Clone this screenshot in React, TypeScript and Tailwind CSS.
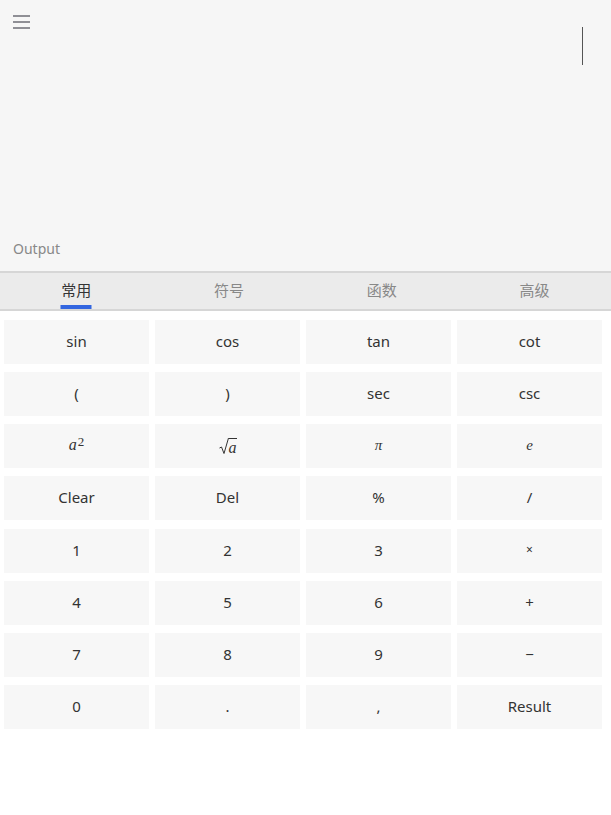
import React from "react";

const tabs = ["常用", "符号", "函数", "高级"];

type Key = { label: React.ReactNode; math?: boolean };

const Sup = () => (
  <span className="italic" style={{ fontFamily: "'Liberation Serif', serif" }}>
    <span className="text-[16px]">a</span>
    <sup className="not-italic text-[13px] relative -top-[4px] ml-[1px]">2</sup>
  </span>
);

const Sqrt = () => (
  <span className="inline-flex items-end mt-[3px]" style={{ fontFamily: "'Liberation Serif', serif" }}>
    <svg width="10" height="18" viewBox="0 0 10 18" className="mb-[1px]">
      <path d="M0.5 11 L2.5 10 L5 16.5 L9.5 1" fill="none" stroke="#333" strokeWidth="1" />
    </svg>
    <span className="italic text-[16px] border-t border-[#333] leading-[16px] pt-[1px]">a</span>
  </span>
);

const keys: Key[] = [
  { label: "sin" }, { label: "cos" }, { label: "tan" }, { label: "cot" },
  { label: "(" }, { label: ")" }, { label: "sec" }, { label: "csc" },
  { label: <Sup />, math: true },
  { label: <Sqrt />, math: true },
  { label: <span className="italic text-[15px]" style={{ fontFamily: "'Liberation Serif', serif" }}>π</span>, math: true },
  { label: <span className="italic text-[15px]" style={{ fontFamily: "'Liberation Serif', serif" }}>e</span>, math: true },
  { label: "Clear" }, { label: "Del" }, { label: "%" }, { label: "/" },
  { label: "1" }, { label: "2" }, { label: "3" }, { label: <span className="text-[12px]">×</span> },
  { label: "4" }, { label: "5" }, { label: "6" }, { label: "+" },
  { label: "7" }, { label: "8" }, { label: "9" }, { label: "−" },
  { label: "0" }, { label: "." }, { label: "," }, { label: "Result" },
];

export default function App() {
  return (
    <div
      className="w-[611px] h-[815px] bg-white text-[#333]"
      style={{ fontFamily: "'Noto Sans', 'Noto Sans CJK SC', sans-serif" }}
    >
      <div className="relative h-[271px] bg-[#f6f6f6] flex flex-col justify-between px-[13px] pt-[15px] pb-[13px]">
        <div className="flex flex-col gap-[4px] w-[17px]">
          <div className="h-[2px] bg-[#8f8f95]" />
          <div className="h-[2px] bg-[#8f8f95]" />
          <div className="h-[2px] bg-[#8f8f95]" />
        </div>
        <div className="absolute left-[582px] top-[27px] w-[1px] h-[38px] bg-[#555]" />
        <div className="text-[14px] leading-[18px] text-[#888]">Output</div>
      </div>
      <div className="h-[40px] bg-[#ebebeb] border-t-2 border-b-2 border-[#d6d6d6] grid grid-cols-4">
        {tabs.map((t, i) => (
          <div key={t} className="relative flex items-center justify-center pb-[2px]">
            <span className={`text-[15px] leading-[20px] ${i === 0 ? "text-[#333]" : "text-[#888]"}`}>{t}</span>
            {i === 0 && (
              <div className="absolute bottom-[0px] left-1/2 -translate-x-1/2 w-[31px] h-[4px] bg-[#3366e0]" />
            )}
          </div>
        ))}
      </div>
      <div className="grid grid-cols-[repeat(4,145px)] gap-x-[6px] gap-y-[8.15px] pl-[4px] pt-[9px]">
        {keys.map((k, i) => (
          <div
            key={i}
            className="h-[44px] bg-[#f7f7f7] flex items-center justify-center pb-[2px] text-[15px] leading-[20px] text-[#333]"
          >
            {k.label}
          </div>
        ))}
      </div>
    </div>
  );
}
